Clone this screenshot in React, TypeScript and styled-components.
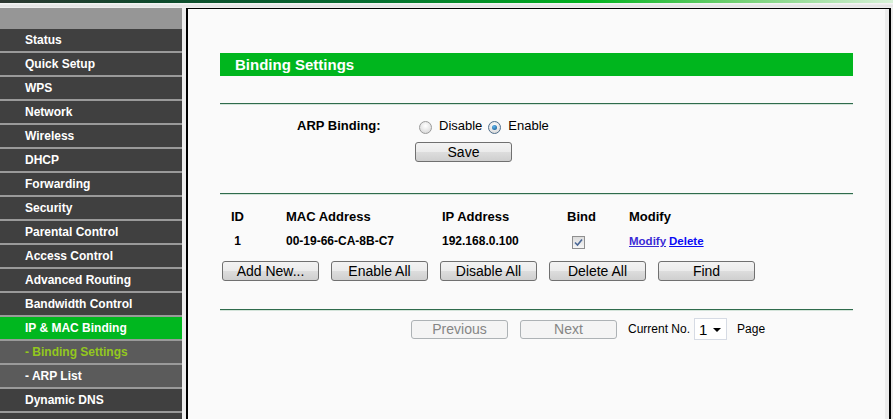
import React from 'react'
import styled, { createGlobalStyle } from 'styled-components'

const GlobalStyle = createGlobalStyle`
  html, body {
    margin: 0;
    padding: 0;
    background: #ececec;
    font-family: "Liberation Sans", Arial, sans-serif;
    overflow: hidden;
  }
`

const Page = styled.div`
  width: 893px;
  height: 419px;
  overflow: hidden;
  display: flex;
  flex-direction: column;
`

const TopStrip = styled.div`
  height: 3px;
  flex-shrink: 0;
  background: linear-gradient(
    to right,
    #2e3832 0%,
    #0d4a2c 18%,
    #066f30 42%,
    #00b31e 66%,
    #6fcf70 82%,
    #d8f1d8 100%
  );
`

const TopGap = styled.div`
  height: 5px;
  flex-shrink: 0;
  background: linear-gradient(to bottom, #f6f6f6, #e2e2e2 60%, #f2f2f2);
`

const Body = styled.div`
  flex: 1;
  display: flex;
  min-height: 0;
`

const Menu = styled.nav`
  width: 182px;
  margin-right: 4px;
  display: flex;
  flex-direction: column;
  background: #9a9a9a;
  overflow: hidden;
`

const MenuHead = styled.div`
  flex-shrink: 0;
  height: 21px;
  background: #969696;
`

const MenuItem = styled.div<{ $active?: boolean; $sub?: boolean; $current?: boolean }>`
  flex-shrink: 0;
  height: 22px;
  padding-left: 25px;
  display: flex;
  align-items: center;
  font-size: 12px;
  font-weight: bold;
  color: ${(p) => (p.$current ? '#93c81e' : '#ffffff')};
  background: ${(p) => (p.$active ? '#00b71f' : p.$sub ? '#5b5b5b' : '#404040')};
  & + & {
    margin-top: 2px;
  }
`

const Frame = styled.main`
  width: 701px;
  border-left: 2px solid #000;
  border-top: 1px solid #000;
  border-right: 2px solid #000;
  background: #fafafa;
  box-shadow: inset -4px 0 0 #ececec;
`

const Panel = styled.section`
  width: 633px;
  margin: 44px 0 0 32px;
  display: flex;
  flex-direction: column;
`

const TitleBar = styled.h1`
  margin: 0;
  height: 23px;
  padding-left: 15px;
  display: flex;
  align-items: center;
  background: #00b61e;
  color: #fff;
  font-size: 15px;
  font-weight: bold;
`

const Divider = styled.div<{ $top: number }>`
  margin-top: ${(p) => p.$top}px;
  height: 1px;
  background: #2f6b4c;
  border-bottom: 1px solid #d4e4da;
`

const ArpRow = styled.div`
  margin-top: 11px;
  height: 18px;
  display: flex;
  align-items: center;
  font-size: 13px;
  color: #000;
`

const ArpLabel = styled.span`
  margin-left: 77px;
  width: 122px;
  font-weight: bold;
`

const RadioLabel = styled.label`
  display: flex;
  align-items: center;
  margin-right: 6px;
`

const Radio = styled.span<{ $checked?: boolean }>`
  position: relative;
  width: 11px;
  height: 11px;
  margin: 4px 7px 0 0;
  border-radius: 50%;
  border: 1px solid ${(p) => (p.$checked ? '#4f6e8c' : '#9a9a9a')};
  background: radial-gradient(circle at 50% 35%, #ffffff, #d2d2d2);
  &::after {
    content: '';
    display: ${(p) => (p.$checked ? 'block' : 'none')};
    position: absolute;
    left: 3px;
    top: 3px;
    width: 5px;
    height: 5px;
    border-radius: 50%;
    background: radial-gradient(circle at 40% 35%, #5fb6ee, #0d4f87);
  }
`

const Button = styled.button<{ $disabled?: boolean }>`
  width: 97px;
  height: 20px;
  padding: 0;
  font-family: "Liberation Sans", Arial, sans-serif;
  font-size: 14px;
  color: ${(p) => (p.$disabled ? '#858585' : '#000')};
  border: 1px solid ${(p) => (p.$disabled ? '#adb2b5' : '#707070')};
  border-radius: 3px;
  background: ${(p) =>
    p.$disabled
      ? '#f4f4f4'
      : 'linear-gradient(to bottom, #f3f3f3 0%, #ebebeb 50%, #dddddd 51%, #cfcfcf 100%)'};
`

const SaveButton = styled(Button)`
  margin: 8px 0 0 195px;
`

const TableRow = styled.div<{ $top: number; $head?: boolean }>`
  margin-top: ${(p) => p.$top}px;
  height: 18px;
  display: grid;
  grid-template-columns: 35px 187px 125px 62px 1fr;
  align-items: center;
  font-size: ${(p) => (p.$head ? 13 : 12)}px;
  font-weight: bold;
  color: #000;
`

const Cell = styled.div<{ $center?: boolean; $pad?: number }>`
  padding-left: ${(p) => p.$pad ?? 0}px;
  display: flex;
  justify-content: ${(p) => (p.$center ? 'center' : 'flex-start')};
  align-items: center;
`

const Check = styled.span`
  width: 11px;
  height: 11px;
  margin-top: 3px;
  border: 1px solid #8f8f8f;
  background: linear-gradient(to bottom, #dcdcdc, #f6f6f6);
  display: flex;
  align-items: center;
  justify-content: center;
`

const Link = styled.a<{ $visited?: boolean }>`
  color: ${(p) => (p.$visited ? '#3b2bd6' : '#0a0af5')};
  text-decoration: underline;
  margin-right: 3px;
  font-size: 11.5px;
  cursor: pointer;
`

const ButtonRow = styled.div`
  margin: 11px 0 0 2px;
  display: flex;
  gap: 12px;
`

const Pager = styled.div`
  margin: 7px 0 0 191px;
  height: 22px;
  display: flex;
  align-items: center;
  font-size: 12px;
  color: #000;
`

const PagerButton = styled(Button)`
  height: 19px;
  margin-right: 12px;
`

const PagerText = styled.span`
  margin-left: -1px;
`

const Select = styled.div`
  position: relative;
  box-sizing: border-box;
  width: 33px;
  height: 22px;
  margin: 0 10px 0 4px;
  padding-left: 4px;
  border: 1px solid #d6dbe4;
  background: #fff;
  display: flex;
  align-items: center;
  font-size: 15px;
  &::after {
    content: '';
    position: absolute;
    right: 5px;
    top: 9px;
    border-left: 4px solid transparent;
    border-right: 4px solid transparent;
    border-top: 4px solid #000;
  }
`

const menu: { label: string; active?: boolean; sub?: boolean; current?: boolean }[] = [
  { label: 'Status' },
  { label: 'Quick Setup' },
  { label: 'WPS' },
  { label: 'Network' },
  { label: 'Wireless' },
  { label: 'DHCP' },
  { label: 'Forwarding' },
  { label: 'Security' },
  { label: 'Parental Control' },
  { label: 'Access Control' },
  { label: 'Advanced Routing' },
  { label: 'Bandwidth Control' },
  { label: 'IP & MAC Binding', active: true },
  { label: '- Binding Settings', sub: true, current: true },
  { label: '- ARP List', sub: true },
  { label: 'Dynamic DNS' },
]

const tableButtons = ['Add New...', 'Enable All', 'Disable All', 'Delete All', 'Find']

export default function App() {
  return (
    <Page>
      <GlobalStyle />
      <TopStrip />
      <TopGap />
      <Body>
        <Menu>
          <MenuHead />
          {menu.map((m) => (
            <MenuItem key={m.label} $active={m.active} $sub={m.sub} $current={m.current}>
              {m.label}
            </MenuItem>
          ))}
          {/* next entry, scrolled out of view */}
          <MenuItem aria-hidden />
        </Menu>
        <Frame>
          <Panel>
            <TitleBar>Binding Settings</TitleBar>
            <Divider $top={27} />
            <ArpRow>
              <ArpLabel>ARP Binding:</ArpLabel>
              <RadioLabel>
                <Radio />
                Disable
              </RadioLabel>
              <RadioLabel>
                <Radio $checked />
                Enable
              </RadioLabel>
            </ArpRow>
            <SaveButton>Save</SaveButton>
            <Divider $top={31} />
            <TableRow $top={12} $head>
              <Cell $center>ID</Cell>
              <Cell $pad={31}>MAC Address</Cell>
              <Cell>IP Address</Cell>
              <Cell>Bind</Cell>
              <Cell>Modify</Cell>
            </TableRow>
            <TableRow $top={7}>
              <Cell $center>1</Cell>
              <Cell $pad={31}>00-19-66-CA-8B-C7</Cell>
              <Cell>192.168.0.100</Cell>
              <Cell $pad={5}>
                <Check>
                  <svg width="9" height="9" viewBox="0 0 9 9">
                    <path d="M1 4.5 L3.5 7 L8 1.5" fill="none" stroke="#4a6796" strokeWidth="1.6" />
                  </svg>
                </Check>
              </Cell>
              <Cell>
                <Link $visited>Modify</Link>
                <Link>Delete</Link>
              </Cell>
            </TableRow>
            <ButtonRow>
              {tableButtons.map((b) => (
                <Button key={b}>{b}</Button>
              ))}
            </ButtonRow>
            <Divider $top={28} />
            <Pager>
              <PagerButton $disabled>Previous</PagerButton>
              <PagerButton $disabled>Next</PagerButton>
              <PagerText>Current No.</PagerText>
              <Select>1</Select>
              <span>Page</span>
            </Pager>
          </Panel>
        </Frame>
      </Body>
    </Page>
  )
}
